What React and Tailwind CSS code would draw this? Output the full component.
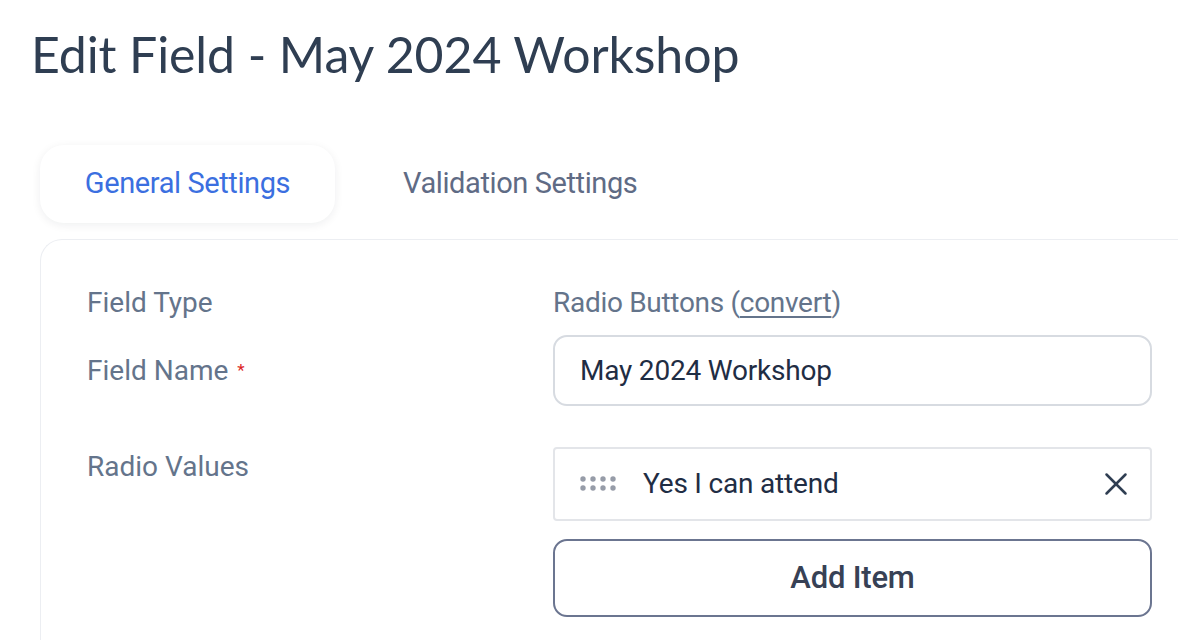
import { X } from "lucide-react";

const labelCls = "w-[466px] shrink-0 text-[28px] leading-[32px] text-[#64748b]";

function DragHandle() {
  return (
    <svg width="38" height="16" viewBox="0 0 38 16" className="shrink-0" aria-hidden="true">
      {[0, 1].map((r) =>
        [0, 1, 2, 3].map((c) => (
          <circle key={`${r}-${c}`} cx={3 + c * 10} cy={3 + r * 9} r="2.7" fill="#969ca8" />
        ))
      )}
    </svg>
  );
}

export default function App() {
  return (
    <div
      className="min-h-[640px] w-[1178px] overflow-hidden bg-white"
      style={{ fontFamily: "Roboto, 'Liberation Sans', sans-serif" }}
    >
      <h1
        className="pl-[31px] pt-[21px] text-[50px] leading-[66px] tracking-[-0.1px] text-[#2f3e52]"
        style={{ fontFamily: "Lato, 'Noto Sans', sans-serif" }}
      >
        Edit Field - May 2024 Workshop
      </h1>

      <div className="ml-[40px] mt-[58px] flex items-center">
        <button className="h-[78px] w-[295px] rounded-[24px] bg-white text-[29px] tracking-[-0.4px] text-[#3b6fe0] shadow-[0_2px_10px_rgba(15,23,42,0.07)]">
          General Settings
        </button>
        <button className="ml-[68px] text-[29px] tracking-[-0.4px] text-[#5f6b85]">
          Validation Settings
        </button>
      </div>

      <div className="ml-[40px] mt-[16px] h-[420px] rounded-tl-[22px] border-l border-t border-[#eceef2] pl-[46px] pt-[47px]">
        <div className="flex items-center">
          <div className={labelCls}>Field Type</div>
          <div className="text-[28px] leading-[32px] tracking-[-0.3px] text-[#64748b]">
            Radio Buttons (<span className="underline underline-offset-[4px]">convert</span>)
          </div>
        </div>

        <div className="mt-[16px] flex items-center">
          <div className={`${labelCls} flex items-start`}>
            Field Name
            <span className="ml-[9px] mt-[-1px] text-[17px] text-[#dc2626]">*</span>
          </div>
          <div className="flex h-[71px] w-[599px] items-center rounded-[14px] border-2 border-[#d7dbe1] px-[25px] text-[28px] tracking-[-0.2px] text-[#1f2d44]">
            May 2024 Workshop
          </div>
        </div>

        <div className="mt-[41px] flex items-start">
          <div className={`${labelCls} mt-[4px]`}>Radio Values</div>
          <div className="flex w-[599px] flex-col gap-[18px]">
            <div className="flex h-[74px] items-center rounded-[4px] border-2 border-[#e3e5e9] pl-[25px] pr-[15px]">
              <DragHandle />
              <span className="ml-[25px] flex-1 text-[28px] tracking-[-0.2px] text-[#1f2d44]">
                Yes I can attend
              </span>
              <X size={38} strokeWidth={1.6} color="#2f3e52" />
            </div>
            <button className="h-[78px] rounded-[14px] border-2 border-[#6b7590] text-[31px] font-medium tracking-[-0.2px] text-[#374155]">
              Add Item
            </button>
          </div>
        </div>
      </div>
    </div>
  );
}
